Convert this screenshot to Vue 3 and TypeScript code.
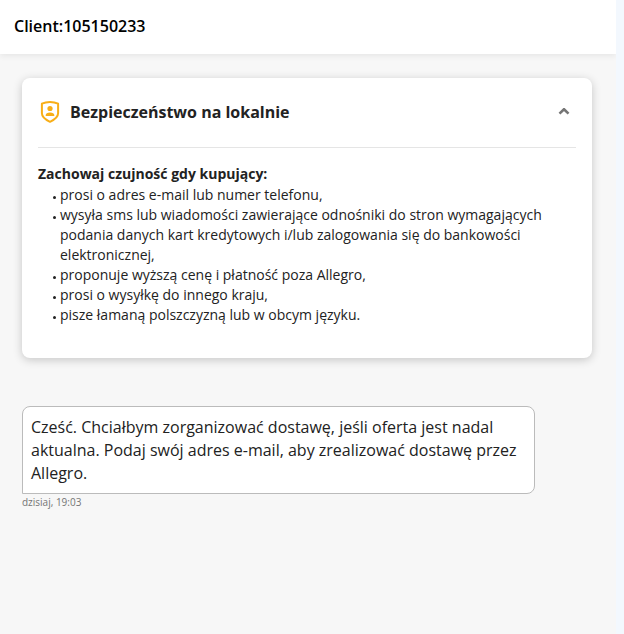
<script setup lang="ts">
import { ref } from 'vue'

const client = 'Client:105150233'
const open = ref(true)
const tips: string[] = [
  'prosi o adres e-mail lub numer telefonu,',
  'wysyła sms lub wiadomości zawierające odnośniki do stron wymagających podania danych kart kredytowych i/lub zalogowania się do bankowości elektronicznej,',
  'proponuje wyższą cenę i płatność poza Allegro,',
  'prosi o wysyłkę do innego kraju,',
  'pisze łamaną polszczyzną lub w obcym języku.',
]
const message =
  'Cześć. Chciałbym zorganizować dostawę, jeśli oferta jest nadal aktualna. Podaj swój adres e-mail, aby zrealizować dostawę przez Allegro.'
const time = 'dzisiaj, 19:03'
</script>

<template>
  <div class="page">
    <header class="header">
      <h1>{{ client }}</h1>
    </header>
    <main class="chat">
      <section class="card">
        <h2 class="card-title">
          <button class="toggle" type="button" :aria-expanded="open" @click="open = !open">
            <svg viewBox="0 0 20 22" width="20" height="22" aria-hidden="true">
              <path d="M10 1 C13 1 15.8 1.6 18.1 2.7 V12.2 C18.1 16.2 14.6 18.6 10 20.8 C5.4 18.6 1.9 16.2 1.9 12.2 V2.7 C4.2 1.6 7 1 10 1 Z" fill="none" stroke="#f8ae17" stroke-width="2" stroke-linejoin="round" />
              <circle cx="10" cy="7.5" r="2.6" fill="#f8ae17" />
              <path d="M5.7 15 V14.2 C5.7 12.3 7.5 11.4 10 11.4 S14.3 12.3 14.3 14.2 V15 Z" fill="#f8ae17" />
            </svg>
            <span class="title-text">Bezpieczeństwo na lokalnie</span>
            <svg :class="{ closed: !open }" viewBox="0 0 12 8" width="12" height="8" aria-hidden="true">
              <path d="M1.5 5.6 L6 1.2 L10.5 5.6" fill="none" stroke="#757575" stroke-width="2.6" />
            </svg>
          </button>
        </h2>
        <div v-if="open" class="card-body">
          <p class="lead">Zachowaj czujność gdy kupujący:</p>
          <ul>
            <li v-for="tip in tips" :key="tip">{{ tip }}</li>
          </ul>
        </div>
      </section>
      <article class="message">
        <p class="bubble">{{ message }}</p>
        <time>{{ time }}</time>
      </article>
    </main>
  </div>
</template>

<style>
body {
  margin: 0;
  background: #f3f8fe;
}
</style>

<style scoped>
.page {
  min-height: 100vh;
  margin-right: 8px;
  display: flex;
  flex-direction: column;
  overflow: hidden;
  background: #f7f7f7;
  color: #222;
  font-family: 'Open Sans', 'Noto Sans', sans-serif;
}
h1,
h2,
p,
ul {
  margin: 0;
  padding: 0;
}
.header {
  padding: 14px 14px 16px;
  background: #fff;
  box-shadow: 0 2px 6px rgba(0, 0, 0, 0.07);
}
h1 {
  font-size: 16px;
  line-height: 24px;
  font-weight: 600;
  color: #000;
}
.chat {
  padding: 24px 24px 24px 22px;
}
.card {
  padding: 0 16px 32px;
  background: #fff;
  border-radius: 8px;
  box-shadow: 0 2px 10px rgba(0, 0, 0, 0.2);
}
.card-title {
  border-bottom: 1px solid #e5e5e5;
}
.toggle {
  width: 100%;
  height: 69px;
  padding: 0 6px 1px 2px;
  display: flex;
  align-items: center;
  gap: 10px;
  border: 0;
  background: none;
  color: inherit;
  font: inherit;
  font-size: 16px;
  cursor: pointer;
}
.title-text {
  flex: 1;
  text-align: left;
}
.closed {
  transform: rotate(180deg);
}
.card-body {
  padding-top: 16px;
  font-size: 14px;
  line-height: 20px;
}
.lead {
  font-weight: 700;
}
ul {
  padding: 1px 0 1px 22px;
  list-style: none;
}
li::before {
  content: '';
  float: left;
  width: 3px;
  height: 3px;
  margin: 11px 0 0 -7px;
  border-radius: 50%;
  background: #222;
}
.message {
  max-width: 513px;
  margin-top: 48px;
}
.bubble {
  padding: 9px 8px 8px;
  border: 1px solid #bbb;
  border-radius: 8px 8px 8px 0;
  background: #fff;
  font-size: 16px;
  line-height: 23px;
}
time {
  display: block;
  font-size: 10px;
  line-height: 16px;
  color: #757575;
}
</style>
